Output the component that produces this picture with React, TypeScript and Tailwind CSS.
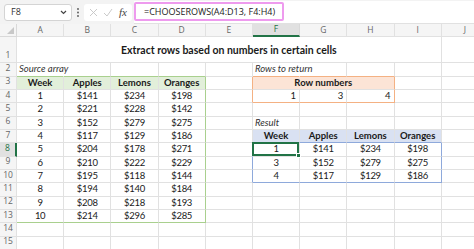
import React from 'react';

const COLS = ['A', 'B', 'C', 'D', 'E', 'F', 'G', 'H', 'I', 'J'];

const source = [
  [1, 141, 234, 198],
  [2, 221, 228, 142],
  [3, 152, 279, 275],
  [4, 117, 129, 186],
  [5, 204, 178, 271],
  [6, 210, 222, 229],
  [7, 195, 118, 144],
  [8, 194, 140, 184],
  [9, 208, 218, 193],
  [10, 214, 296, 285],
];

const result = [
  [1, 141, 234, 198],
  [3, 152, 279, 275],
  [4, 117, 129, 186],
];

const headers = ['Week', 'Apples', 'Lemons', 'Oranges'];

type Edge = 'grid' | 'none' | 'green' | 'orange' | 'blue';

const RIGHT: Record<Edge, string> = {
  grid: 'border-r-[#e1e1e1]',
  none: 'border-r-transparent',
  green: 'border-r-[#a9d08e]',
  orange: 'border-r-[#f4b183]',
  blue: 'border-r-[#8ea9db]',
};

const BOTTOM: Record<Edge, string> = {
  grid: 'border-b-[#e1e1e1]',
  none: 'border-b-transparent',
  green: 'border-b-[#a9d08e]',
  orange: 'border-b-[#f4b183]',
  blue: 'border-b-[#8ea9db]',
};

interface CellSpec {
  text?: string;
  span?: number;
  cls?: string;
  right?: Edge;
  bottom?: Edge;
  selected?: boolean;
}

const NUM = 'justify-center tracking-[-0.3px]';

function money(v: number) {
  return '$' + v;
}

function buildRow(row: number): CellSpec[] {
  const cells: CellSpec[] = COLS.map(() => ({}));

  if (row === 1) {
    return [
      { text: 'Extract rows based on numbers in certain cells', span: 9, cls: 'justify-center font-bold text-[10.5px] pt-[2px]' },
      {},
    ];
  }

  // source array A2:D13
  if (row === 2) {
    cells[0] = { text: 'Source array', cls: 'italic justify-start pl-[2px] text-[#333]', right: 'none', bottom: 'green' };
    cells[1] = { bottom: 'green' };
    cells[2] = { bottom: 'green' };
    cells[3] = { bottom: 'green' };
  }
  if (row === 3) {
    headers.forEach((h, i) => {
      cells[i] = { text: h, cls: 'justify-center font-bold bg-[#e2efda]' };
    });
  }
  if (row >= 4 && row <= 13) {
    const d = source[row - 4];
    cells[0] = { text: String(d[0]), cls: NUM };
    cells[1] = { text: money(d[1]), cls: NUM };
    cells[2] = { text: money(d[2]), cls: NUM };
    cells[3] = { text: money(d[3]), cls: NUM };
  }
  if (row >= 3 && row <= 13) {
    cells[3].right = 'green';
    if (row === 13) {
      for (let i = 0; i < 4; i++) cells[i].bottom = 'green';
    }
  }

  // rows to return F2:H4
  if (row === 2) {
    cells[5] = { text: 'Rows to return', cls: 'italic justify-start pl-[2px] text-[#333]', right: 'none', bottom: 'orange' };
    cells[6] = { bottom: 'orange' };
    cells[7] = { bottom: 'orange' };
  }
  if (row === 3) {
    cells[4] = { right: 'orange' };
    cells[5] = { text: 'Row numbers', span: 3, cls: 'justify-center font-bold bg-[#fce4d6]', right: 'orange' };
    cells[6] = { span: 0 };
    cells[7] = { span: 0 };
  }
  if (row === 4) {
    cells[4] = { right: 'orange' };
    cells[5] = { text: '1', cls: 'justify-end pr-[3px]', bottom: 'orange' };
    cells[6] = { text: '3', cls: 'justify-end pr-[3px]', bottom: 'orange' };
    cells[7] = { text: '4', cls: 'justify-end pr-[3px]', bottom: 'orange', right: 'orange' };
  }

  // result F6:I10
  if (row === 6) {
    cells[5] = { text: 'Result', cls: 'italic justify-start pl-[2px] text-[#333]' };
  }
  if (row === 7) {
    headers.forEach((h, i) => {
      cells[5 + i] = { text: h, cls: 'justify-center font-bold bg-[#d9e1f2]', bottom: 'blue' };
    });
  }
  if (row >= 8 && row <= 10) {
    const d = result[row - 8];
    cells[4] = { right: 'blue' };
    cells[5] = { text: String(d[0]), cls: NUM, selected: row === 8 };
    cells[6] = { text: money(d[1]), cls: NUM };
    cells[7] = { text: money(d[2]), cls: NUM };
    cells[8] = { text: money(d[3]), cls: NUM, right: 'blue' };
    if (row === 10) {
      for (let i = 5; i < 9; i++) cells[i].bottom = 'blue';
    }
  }

  return cells.filter((c) => c.span !== 0);
}

function Cell({ spec }: { spec: CellSpec }) {
  const span =
    spec.span === 9 ? 'col-span-9' : spec.span === 3 ? 'col-span-3' : '';
  return (
    <div
      className={`relative flex items-center whitespace-nowrap border-r border-b ${RIGHT[spec.right ?? 'grid']} ${BOTTOM[spec.bottom ?? 'grid']} ${span} ${spec.cls ?? ''}`}
    >
      {spec.text}
      {spec.selected && (
        <div className="absolute -left-[1px] -top-[1px] w-[calc(100%+1px)] h-[calc(100%+1px)] border-2 border-[#217346] z-10">
          <div className="absolute -right-[4px] -bottom-[4px] w-[5px] h-[5px] bg-[#217346] border border-white" />
        </div>
      )}
    </div>
  );
}

function FormulaBar() {
  return (
    <div className="h-[24px] flex items-center bg-[#f3f3f3] font-['Open_Sans',sans-serif] text-[#333]">
      <div className="ml-[4px] w-[68px] h-[17px] bg-white border border-[#d4d4d4] rounded-[3px] flex items-center justify-between pl-[6px] pr-[4px] text-[9px]">
        <span>F8</span>
        <svg width="7" height="5" viewBox="0 0 7 5">
          <path d="M1 1l2.5 2.5L6 1" fill="none" stroke="#444" strokeWidth="1.2" />
        </svg>
      </div>
      <svg className="ml-[4px]" width="4" height="11" viewBox="0 0 4 11">
        <circle cx="2" cy="2" r="0.9" fill="#555" />
        <circle cx="2" cy="5.5" r="0.9" fill="#555" />
        <circle cx="2" cy="9" r="0.9" fill="#555" />
      </svg>
      <div className="ml-[4px] w-[48px] h-[17px] bg-white rounded-[3px] flex items-center pl-[5px]">
        <svg width="9" height="9" viewBox="0 0 9 9">
          <path d="M1 1l7 7M8 1l-7 7" stroke="#c4c4c4" strokeWidth="0.9" />
        </svg>
        <svg className="ml-[5px]" width="10" height="9" viewBox="0 0 10 9">
          <path d="M1 5l3 3 5-7" fill="none" stroke="#c4c4c4" strokeWidth="0.9" />
        </svg>
        <span className="ml-[6px] font-['Liberation_Serif',serif] italic text-[11px] text-[#444]">fx</span>
      </div>
      <div className="ml-[2px] flex-1 h-[23px] bg-white border-b border-[#e1e1e1] flex items-center">
        <div className="w-[150px] h-[19px] border-2 border-[#ee9bee] rounded-[2px] flex items-center pl-[8px] text-[9px] text-[#222]">
          =CHOOSEROWS(A4:D13, F4:H4)
        </div>
      </div>
    </div>
  );
}

function Sheet() {
  const rows = Array.from({ length: 15 }, (_, i) => i + 1);
  return (
    <div className="grid grid-cols-[17px_repeat(10,47.2px)] grid-rows-[13px_26.33px_repeat(14,13.33px)] text-[9.5px] text-[#1a1a1a]">
      {/* corner */}
      <div className="bg-[#f5f5f5] border-r border-b border-[#d9d9d9] flex items-end justify-end pr-[2px] pb-[2px]">
        <svg width="7" height="7" viewBox="0 0 7 7">
          <path d="M7 0v7H0z" fill="#c8c8c8" />
        </svg>
      </div>
      {COLS.map((c) => (
        <div
          key={c}
          className={
            c === 'F'
              ? "flex items-center justify-center bg-[#e1e1e1] border-r border-r-[#d9d9d9] border-b-2 border-b-[#217346] text-[#217346] font-['Open_Sans',sans-serif] text-[8.5px]"
              : "flex items-center justify-center bg-[#f5f5f5] border-r border-b border-[#e1e1e1] text-[#666] font-['Open_Sans',sans-serif] text-[8.5px]"
          }
        >
          {c}
        </div>
      ))}
      {rows.map((r) => (
        <React.Fragment key={r}>
          <div
            className={
              r === 8
                ? "flex items-end justify-center pb-[1px] bg-[#e1e1e1] border-r-2 border-r-[#217346] border-b border-b-[#e1e1e1] text-[#217346] font-['Open_Sans',sans-serif] text-[8.5px]"
                : "flex items-end justify-center pb-[1px] bg-[#f5f5f5] border-r border-b border-[#e1e1e1] text-[#666] font-['Open_Sans',sans-serif] text-[8.5px]"
            }
          >
            {r}
          </div>
          {buildRow(r).map((spec, i) => (
            <Cell key={i} spec={spec} />
          ))}
        </React.Fragment>
      ))}
    </div>
  );
}

export default function App() {
  return (
    <div className="w-[474px] h-[249px] overflow-hidden bg-white font-['Lato',sans-serif]">
      <FormulaBar />
      <Sheet />
    </div>
  );
}
